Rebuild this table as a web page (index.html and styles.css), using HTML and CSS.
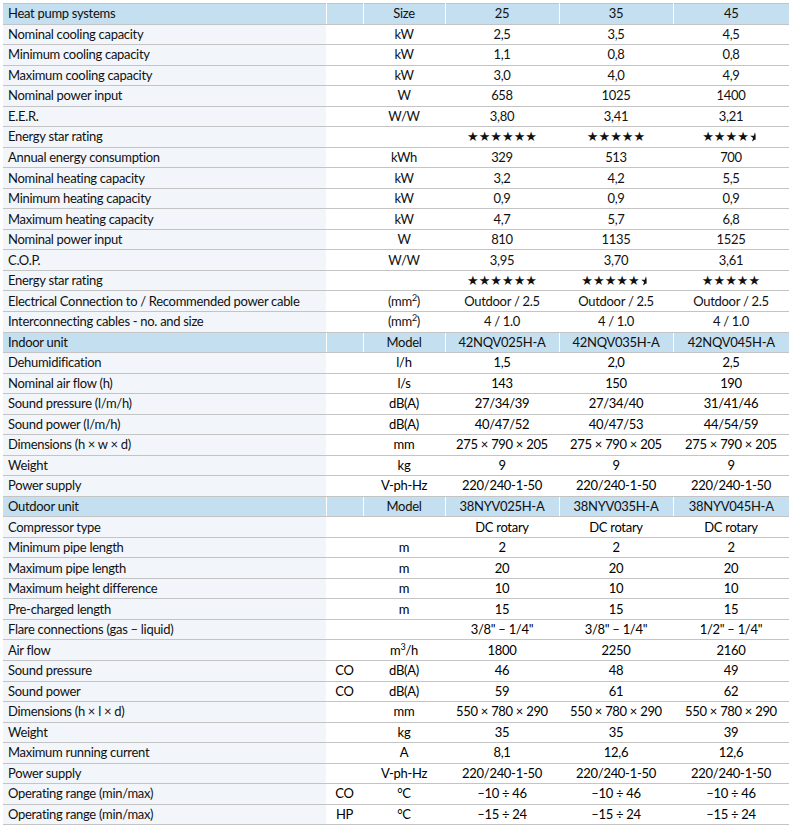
FILE: index.html
```html
<!DOCTYPE html>
<html>
<head>
<meta charset="utf-8">
<link rel="stylesheet" href="styles.css">
</head>
<body>
<table class="spec">
<colgroup>
<col class="c-label"><col class="c-code"><col class="c-unit"><col class="c-val"><col class="c-val"><col class="c-val3">
</colgroup>
<tbody>
<tr class="sec"><td>Heat pump systems</td><td></td><td>Size</td><td>25</td><td>35</td><td>45</td></tr>
<tr><td>Nominal cooling capacity</td><td></td><td>kW</td><td>2,5</td><td>3,5</td><td>4,5</td></tr>
<tr><td>Minimum cooling capacity</td><td></td><td>kW</td><td>1,1</td><td>0,8</td><td>0,8</td></tr>
<tr><td>Maximum cooling capacity</td><td></td><td>kW</td><td>3,0</td><td>4,0</td><td>4,9</td></tr>
<tr><td>Nominal power input</td><td></td><td>W</td><td>658</td><td>1025</td><td>1400</td></tr>
<tr><td>E.E.R.</td><td></td><td>W/W</td><td>3,80</td><td>3,41</td><td>3,21</td></tr>
<tr><td>Energy star rating</td><td></td><td></td><td class="stars">★★★★★★</td><td class="stars">★★★★★</td><td class="stars">★★★★<svg class="half" viewBox="0 0 10 10" width="10" height="10"><polygon points="5,0.3 6.2,3.7 9.8,3.8 6.9,6 8,9.5 5,7.4 2,9.5 3.1,6 0.2,3.8 3.8,3.7" fill="#111" clip-path="url(#hc)"/><defs><clipPath id="hc"><rect x="0" y="0" width="5.6" height="10"/></clipPath></defs></svg></td></tr>
<tr><td>Annual energy consumption</td><td></td><td>kWh</td><td>329</td><td>513</td><td>700</td></tr>
<tr><td>Nominal heating capacity</td><td></td><td>kW</td><td>3,2</td><td>4,2</td><td>5,5</td></tr>
<tr><td>Minimum heating capacity</td><td></td><td>kW</td><td>0,9</td><td>0,9</td><td>0,9</td></tr>
<tr><td>Maximum heating capacity</td><td></td><td>kW</td><td>4,7</td><td>5,7</td><td>6,8</td></tr>
<tr><td>Nominal power input</td><td></td><td>W</td><td>810</td><td>1135</td><td>1525</td></tr>
<tr><td>C.O.P.</td><td></td><td>W/W</td><td>3,95</td><td>3,70</td><td>3,61</td></tr>
<tr><td>Energy star rating</td><td></td><td></td><td class="stars">★★★★★★</td><td class="stars">★★★★★<svg class="half" viewBox="0 0 10 10" width="10" height="10"><polygon points="5,0.3 6.2,3.7 9.8,3.8 6.9,6 8,9.5 5,7.4 2,9.5 3.1,6 0.2,3.8 3.8,3.7" fill="#111" clip-path="url(#hc)"/></svg></td><td class="stars">★★★★★</td></tr>
<tr><td>Electrical Connection to / Recommended power cable</td><td></td><td>(mm<sup>2</sup>)</td><td>Outdoor / 2.5</td><td>Outdoor / 2.5</td><td>Outdoor / 2.5</td></tr>
<tr><td>Interconnecting cables - no. and size</td><td></td><td>(mm<sup>2</sup>)</td><td>4 / 1.0</td><td>4 / 1.0</td><td>4 / 1.0</td></tr>
<tr class="sec"><td>Indoor unit</td><td></td><td>Model</td><td>42NQV025H-A</td><td>42NQV035H-A</td><td>42NQV045H-A</td></tr>
<tr class="b"><td>Dehumidification</td><td></td><td>l/h</td><td>1,5</td><td>2,0</td><td>2,5</td></tr>
<tr class="b"><td>Nominal air flow (h)</td><td></td><td>l/s</td><td>143</td><td>150</td><td>190</td></tr>
<tr class="b"><td>Sound pressure (l/m/h)</td><td></td><td>dB(A)</td><td>27/34/39</td><td>27/34/40</td><td>31/41/46</td></tr>
<tr class="b"><td>Sound power (l/m/h)</td><td></td><td>dB(A)</td><td>40/47/52</td><td>40/47/53</td><td>44/54/59</td></tr>
<tr class="b"><td>Dimensions (h × w × d)</td><td></td><td>mm</td><td>275 × 790 × 205</td><td>275 × 790 × 205</td><td>275 × 790 × 205</td></tr>
<tr class="b"><td>Weight</td><td></td><td>kg</td><td>9</td><td>9</td><td>9</td></tr>
<tr class="b"><td>Power supply</td><td></td><td>V-ph-Hz</td><td>220/240-1-50</td><td>220/240-1-50</td><td>220/240-1-50</td></tr>
<tr class="sec"><td>Outdoor unit</td><td></td><td>Model</td><td>38NYV025H-A</td><td>38NYV035H-A</td><td>38NYV045H-A</td></tr>
<tr class="b"><td>Compressor type</td><td></td><td></td><td>DC rotary</td><td>DC rotary</td><td>DC rotary</td></tr>
<tr class="b"><td>Minimum pipe length</td><td></td><td>m</td><td>2</td><td>2</td><td>2</td></tr>
<tr class="b"><td>Maximum pipe length</td><td></td><td>m</td><td>20</td><td>20</td><td>20</td></tr>
<tr class="b"><td>Maximum height difference</td><td></td><td>m</td><td>10</td><td>10</td><td>10</td></tr>
<tr class="b"><td>Pre-charged length</td><td></td><td>m</td><td>15</td><td>15</td><td>15</td></tr>
<tr class="b"><td>Flare connections (gas – liquid)</td><td></td><td></td><td>3/8" – 1/4"</td><td>3/8" – 1/4"</td><td>1/2" – 1/4"</td></tr>
<tr class="b"><td>Air flow</td><td></td><td>m<sup>3</sup>/h</td><td>1800</td><td>2250</td><td>2160</td></tr>
<tr class="b"><td>Sound pressure</td><td>CO</td><td>dB(A)</td><td>46</td><td>48</td><td>49</td></tr>
<tr class="b"><td>Sound power</td><td>CO</td><td>dB(A)</td><td>59</td><td>61</td><td>62</td></tr>
<tr class="b"><td>Dimensions (h × l × d)</td><td></td><td>mm</td><td>550 × 780 × 290</td><td>550 × 780 × 290</td><td>550 × 780 × 290</td></tr>
<tr class="b"><td>Weight</td><td></td><td>kg</td><td>35</td><td>35</td><td>39</td></tr>
<tr class="b"><td>Maximum running current</td><td></td><td>A</td><td>8,1</td><td>12,6</td><td>12,6</td></tr>
<tr class="b"><td>Power supply</td><td></td><td>V-ph-Hz</td><td>220/240-1-50</td><td>220/240-1-50</td><td>220/240-1-50</td></tr>
<tr class="b"><td>Operating range (min/max)</td><td>CO</td><td>°C</td><td>–10 ÷ 46</td><td>–10 ÷ 46</td><td>–10 ÷ 46</td></tr>
<tr class="b"><td>Operating range (min/max)</td><td>HP</td><td>°C</td><td>–15 ÷ 24</td><td>–15 ÷ 24</td><td>–15 ÷ 24</td></tr>
</tbody>
</table>
</body>
</html>
```
FILE: styles.css
```css
html, body {
  margin: 0;
  padding: 0;
  background: #ffffff;
}
body {
  padding: 3px 0 0 3px;
  font-family: Lato, "Liberation Sans", sans-serif;
  font-size: 13px;
  letter-spacing: -0.3px;
  color: #111111;
}
.spec {
  border-collapse: collapse;
  table-layout: fixed;
  width: 786px;
  border-top: 1px solid #c4c4c4;
}
.c-label { width: 323px; }
.c-code { width: 37px; }
.c-unit { width: 82px; }
.c-val { width: 114px; }
.c-val3 { width: 116px; }
.spec td {
  height: 19.54px;
  padding: 0;
  border-bottom: 1px solid #c4c4c4;
  text-align: center;
  white-space: nowrap;
  line-height: 19px;
}
.spec td:first-child {
  text-align: left;
  padding-left: 5px;
  background: #f2f6fb;
}
.spec tr.sec td {
  background: #c3dff0;
  border-left: 1px solid #ffffff;
}
.spec tr.sec td:first-child {
  border-left: none;
}
.spec tr.b td + td {
  color: #000;
}
.spec sup {
  font-size: 9px;
  line-height: 0;
  vertical-align: 5px;
}
.stars {
  font-family: "DejaVu Sans", sans-serif;
  font-size: 13px;
  letter-spacing: 0;
  color: #111;
}
.half {
  display: inline-block;
  width: 10px;
  height: 10px;
  vertical-align: -1px;
  margin-left: 1px;
}
```
